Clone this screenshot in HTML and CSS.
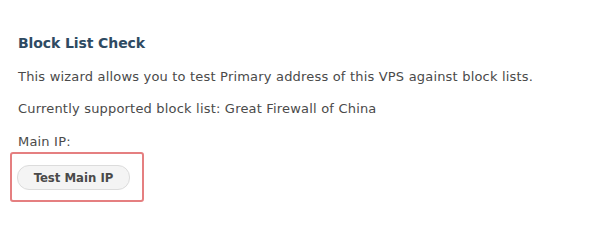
FILE: index.html
```html
<!DOCTYPE html>
<html>
<head>
<meta charset="utf-8">
<link rel="stylesheet" href="styles.css">
</head>
<body>
<div class="page">
  <h2 class="title">Block List Check</h2>
  <p class="text">This wizard allows you to test Primary address of this VPS against block lists.</p>
  <p class="text">Currently supported block list: Great Firewall of China</p>
  <p class="text label">Main IP:</p>
  <div class="highlight">
    <button class="btn">Test Main IP</button>
  </div>
</div>
</body>
</html>
```
FILE: styles.css
```css
html, body {
  margin: 0;
  padding: 0;
  background: #ffffff;
}
.page {
  padding: 35px 18px 0 18px;
  font-family: "DejaVu Sans", Verdana, sans-serif;
  color: #4a4a4a;
}
.title {
  margin: 0 0 17px 0;
  font-size: 14px;
  font-weight: bold;
  color: #2e4a62;
  line-height: 17px;
  letter-spacing: -0.1px;
}
.text {
  margin: 0 0 16px 0;
  font-size: 13px;
  line-height: 16px;
  letter-spacing: 0.19px;
}
.label {
  margin-top: 17px;
  margin-bottom: 2px;
}
.highlight {
  margin-left: -8px;
  width: 125px;
  height: 46px;
  border: 2px solid #e57f80;
  border-radius: 3px;
  box-sizing: content-box;
  display: flex;
  align-items: center;
  padding-left: 5px;
}
.btn {
  font-family: "DejaVu Sans Condensed", "DejaVu Sans", sans-serif;
  font-size: 13px;
  font-weight: bold;
  color: #4a4a4a;
  background: #f4f4f4;
  border: 1px solid #dcdcdc;
  border-radius: 12px;
  height: 25px;
  width: 113px;
  padding: 0;
}
```
